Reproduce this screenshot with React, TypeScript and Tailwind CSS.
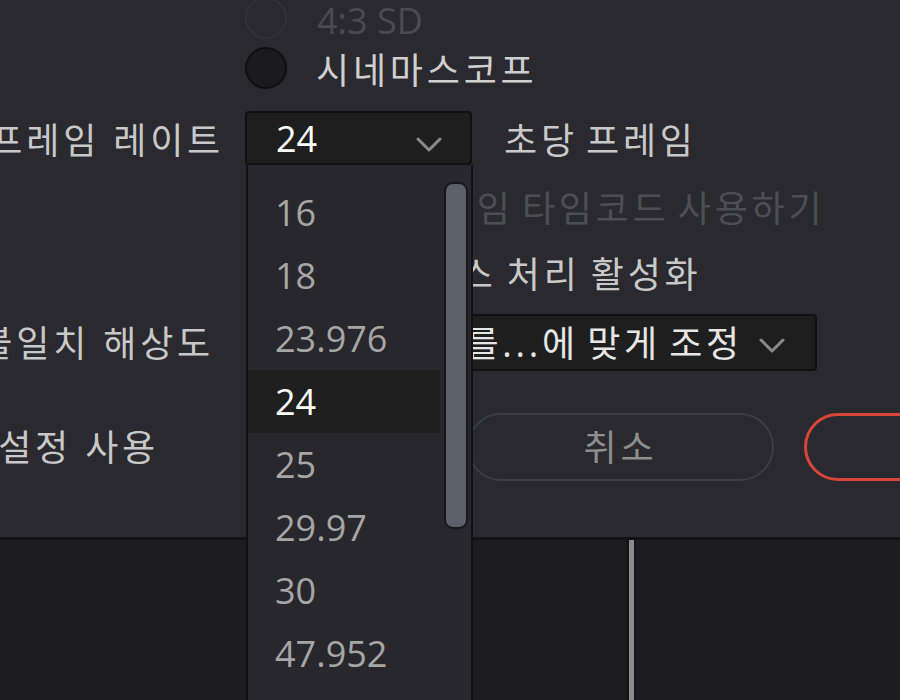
import React from "react";

function Chevron({ className = "" }: { className?: string }) {
  return (
    <svg width="26" height="16" viewBox="0 0 26 16" className={className} fill="none">
      <polyline points="2,2 13,13 24,2" stroke="#8a8a8a" strokeWidth="3" strokeLinecap="round" strokeLinejoin="round" />
    </svg>
  );
}

function Label({ text, pr, mt }: { text: string; pr: string; mt: string }) {
  return (
    <div className={`w-[246px] shrink-0 flex justify-end overflow-hidden whitespace-nowrap text-[#c8c8c8] tracking-[3.8px] ${pr} ${mt}`}>
      <span>{text}</span>
    </div>
  );
}

const items = ["16", "18", "23.976", "24", "25", "29.97", "30", "47.952", "48"];

export default function App() {
  return (
    <div className="relative w-[900px] h-[700px] overflow-hidden bg-[#29292f] font-['Open_Sans','Noto_Sans_CJK_KR',sans-serif] text-[36px] leading-[44px]">
      <div className="h-[537px] flex flex-col">
        {/* Row A */}
        <div className="h-[36px] flex items-center shrink-0">
          <div className="w-[245px] shrink-0" />
          <div className="w-[42px] h-[42px] rounded-full border-2 border-[#323238] bg-[#29292f] shrink-0" />
          <span className="ml-[30px] mt-[6px] text-[#4a4a52] whitespace-nowrap">4:3 SD</span>
        </div>
        {/* Row B */}
        <div className="h-[64px] flex items-center shrink-0">
          <div className="w-[245px] shrink-0" />
          <div className="w-[42px] h-[42px] rounded-full border-2 border-[#0f0f11] bg-[#1b1b1d] shrink-0" />
          <span className="ml-[29px] mt-[6px] tracking-[3.8px] text-[#cfcfcf] whitespace-nowrap">시네마스코프</span>
        </div>
        {/* Row C */}
        <div className="h-[76px] flex items-center shrink-0">
          <Label text="타임라인 프레임 레이트" pr="pr-[22px]" mt="mt-[5px]" />
          <div className="w-[227px] h-[54px] -ml-[1px] shrink-0 rounded-[4px] border-2 border-[#101012] bg-[#1e1e1e] flex items-center pl-[29px] pr-[28px]">
            <span className="text-white mt-[2px]">24</span>
            <div className="flex-1" />
            <Chevron className="mt-[13px]" />
          </div>
          <span className="ml-[32px] mt-[6px] tracking-[3.8px] [word-spacing:-5px] text-[#c8c8c8] whitespace-nowrap">초당 프레임</span>
        </div>
        {/* Row D */}
        <div className="h-[60px] flex items-center shrink-0">
          <div className="w-[246px] shrink-0" />
          <span className="ml-[75px] mt-[6px] tracking-[3.8px] [word-spacing:-5px] text-[#4d4d54] whitespace-nowrap">드롭 프레임 타임코드 사용하기</span>
        </div>
        {/* Row E */}
        <div className="h-[72px] flex items-center shrink-0">
          <div className="w-[246px] shrink-0" />
          <span className="ml-[66px] mt-[6px] tracking-[3.8px] [word-spacing:-3px] text-[#c8c8c8] whitespace-nowrap">인터레이스 처리 활성화</span>
        </div>
        {/* Row F */}
        <div className="h-[68px] flex items-center shrink-0">
          <Label text="불일치 해상도" pr="pr-[32px]" mt="mt-[4px]" />
          <div className="w-[571px] h-[57px] shrink-0 rounded-[4px] border-2 border-[#101012] bg-[#1e1e1e] flex items-center justify-end pr-[30px] overflow-hidden whitespace-nowrap">
            <span className="text-[#e6e6e6] tracking-[3.8px] [word-spacing:-5px] mt-[4px]">크기를...에 맞게 조정</span>
            <Chevron className="ml-[16px] mt-[7px]" />
          </div>
        </div>
        {/* Row G */}
        <div className="h-[142px] flex items-center shrink-0">
          <Label text="프로젝트 설정 사용" pr="pr-[87px]" mt="mt-[2px]" />
          <div className="ml-[221px] w-[307px] h-[68px] shrink-0 rounded-full border-2 border-[#3b3e45] flex items-center justify-center text-[#8e8e8e] tracking-[3.8px] pt-[2px]">
            취소
          </div>
          <div className="ml-[30px] w-[300px] h-[68px] shrink-0 rounded-full border-[3px] border-[#d8463a]" />
        </div>
        <div className="flex-1" />
      </div>
      {/* bottom region */}
      <div className="h-[163px] border-t-[3px] border-[#131317] bg-[#1d1d21] flex">
        <div className="ml-[626px] w-[10px] h-full bg-[#161619] flex justify-center">
          <div className="w-[5px] h-full bg-[#8b8b8b]" />
        </div>
      </div>
      {/* dropdown list overlay */}
      <div className="absolute left-[246px] top-[165px] w-[227px] bottom-0 bg-[#27272d] border-x-2 border-[#111113]">
        <div className="pt-[16px] flex flex-col">
          {items.map((it) => (
            <div
              key={it}
              className={`h-[63px] w-[192px] shrink-0 flex items-center pl-[27px] ${
                it === "24" ? "bg-[#1f1f1f] text-white" : "text-[#a6a6a6]"
              }`}
            >
              {it}
            </div>
          ))}
        </div>
        <div className="absolute left-[196px] top-[17px] w-[24px] h-[347px] rounded-[9px] border-2 border-[#18181a] bg-[#5c6068]" />
      </div>
    </div>
  );
}
